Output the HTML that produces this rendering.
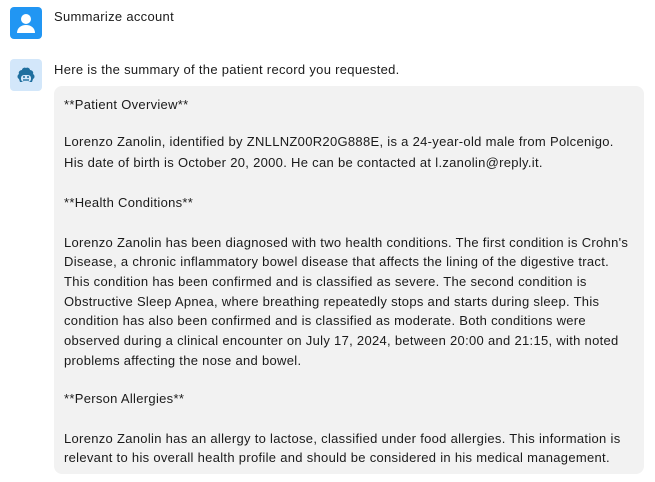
<!DOCTYPE html>
<html><head><style>
body{margin:0;background:#fff;font-family:"Liberation Sans",sans-serif;font-size:13px;letter-spacing:0.3px;color:#1a1a1a;width:655px;height:482px;overflow:hidden;position:relative}
.av{position:absolute;left:10px;width:32px;height:32px;border-radius:4px}
.t{position:absolute;left:54px;white-space:nowrap}
.box{position:absolute;left:54px;top:86px;width:590px;height:388px;background:#f2f2f2;border-radius:8px}
.l{position:absolute;left:64px;white-space:nowrap;line-height:20px}
</style></head><body>
<div class="av" style="top:7px;background:#2196f3">
<svg width="32" height="32" viewBox="0 0 32 32"><circle cx="16" cy="12" r="5" fill="#fff"/><path d="M7 26c0-5 4-8 9-8s9 3 9 8z" fill="#fff"/></svg></div>
<div class="t" style="top:9px">Summarize account</div>
<div class="av" style="top:59px;background:#d3e7fa">
<svg width="32" height="32" viewBox="0 0 32 32"><path d="M9 20c-2-1-2-4 0-5-1-2 1-4 3-4 0-2 3-3 4-2 1-1 4 0 4 2 2 0 4 2 3 4 2 1 2 4 0 5l-1 3H10z" fill="#1f6f9f"/><rect x="11" y="16" width="10" height="7" rx="3" fill="#d3e7fa"/><circle cx="14" cy="18" r="1" fill="#1f6f9f"/><circle cx="18" cy="18" r="1" fill="#1f6f9f"/><path d="M13 21h6" stroke="#1f6f9f" stroke-width="1.4"/></svg></div>
<div class="t" style="top:62px">Here is the summary of the patient record you requested.</div>
<div class="box"></div>
<div class="l" style="top:95px">**Patient Overview**</div>
<div class="l" style="top:132px">Lorenzo Zanolin, identified by ZNLLNZ00R20G888E, is a 24-year-old male from Polcenigo.</div>
<div class="l" style="top:153px">His date of birth is October 20, 2000. He can be contacted at l.zanolin@reply.it.</div>
<div class="l" style="top:193px">**Health Conditions**</div>
<div class="l" style="top:233px">Lorenzo Zanolin has been diagnosed with two health conditions. The first condition is Crohn's</div>
<div class="l" style="top:252px">Disease, a chronic inflammatory bowel disease that affects the lining of the digestive tract.</div>
<div class="l" style="top:272px">This condition has been confirmed and is classified as severe. The second condition is</div>
<div class="l" style="top:292px">Obstructive Sleep Apnea, where breathing repeatedly stops and starts during sleep. This</div>
<div class="l" style="top:311px">condition has also been confirmed and is classified as moderate. Both conditions were</div>
<div class="l" style="top:331px">observed during a clinical encounter on July 17, 2024, between 20:00 and 21:15, with noted</div>
<div class="l" style="top:351px">problems affecting the nose and bowel.</div>
<div class="l" style="top:389px">**Person Allergies**</div>
<div class="l" style="top:429px">Lorenzo Zanolin has an allergy to lactose, classified under food allergies. This information is</div>
<div class="l" style="top:448px">relevant to his overall health profile and should be considered in his medical management.</div>
</body></html>
